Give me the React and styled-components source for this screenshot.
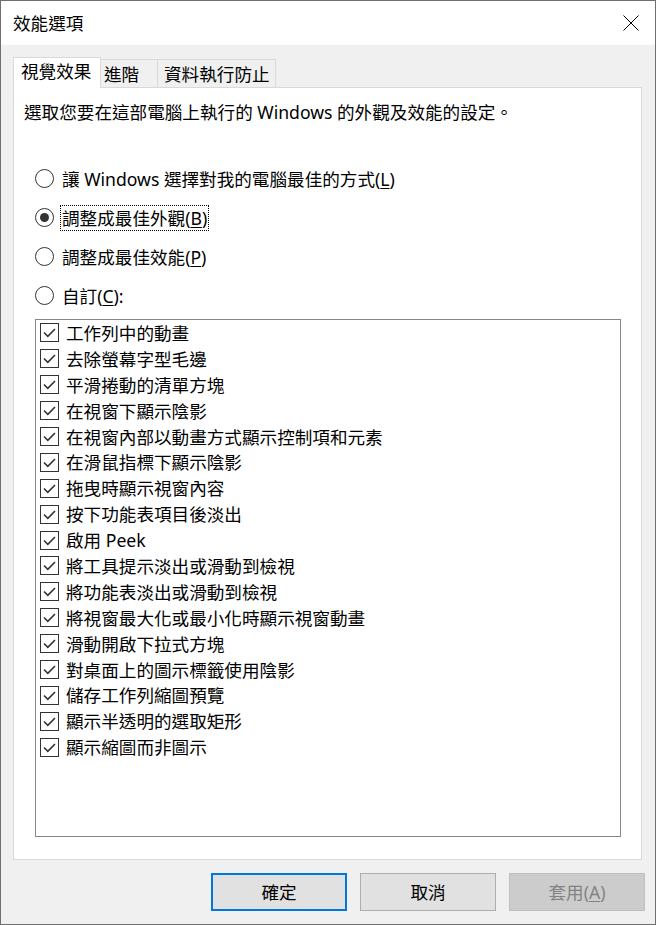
import React from "react";
import styled, { createGlobalStyle } from "styled-components";

const GlobalStyle = createGlobalStyle`
  html, body {
    margin: 0;
    padding: 0;
    background: #ffffff;
  }
  #root {
    width: 656px;
    height: 925px;
  }
`;

const Window = styled.div`
  width: 656px;
  height: 925px;
  box-sizing: border-box;
  border: 1px solid #6f6f6f;
  display: flex;
  flex-direction: column;
  font-family: "Noto Sans", "Noto Sans CJK TC", sans-serif;
  font-size: 17.6px;
  color: #000;
  background: #f0f0f0;
`;

const TitleBar = styled.div`
  height: 44px;
  flex: none;
  background: #ffffff;
  display: flex;
  align-items: center;
  justify-content: space-between;
  padding-left: 12px;
`;

const Title = styled.span`
  line-height: 24px;
`;

const CloseButton = styled.div`
  width: 48px;
  height: 44px;
  display: flex;
  align-items: center;
  justify-content: center;
`;

const Body = styled.div`
  flex: 1;
  display: flex;
  flex-direction: column;
  padding-top: 12px;
`;

const TabStrip = styled.div`
  display: flex;
  align-items: flex-end;
  height: 30px;
  margin-left: 12px;
  position: relative;
  z-index: 1;
`;

const Tab = styled.div`
  box-sizing: border-box;
  width: ${(p) => p.$w}px;
  padding-left: ${(p) => p.$pl}px;
  height: ${(p) => (p.$active ? 31 : 28)}px;
  margin-bottom: ${(p) => (p.$active ? -1 : 0)}px;
  margin-left: ${(p) => (p.$first ? 0 : -1)}px;
  border: 1px solid #d9d9d9;
  border-bottom: none;
  background: ${(p) => (p.$active ? "#ffffff" : "#f0f0f0")};
  position: relative;
  z-index: ${(p) => (p.$active ? 2 : 1)};
  display: flex;
  align-items: ${(p) => (p.$active ? "flex-start" : "center")};
  padding-top: ${(p) => (p.$active ? 1 : 0)}px;
  line-height: 24px;
  white-space: nowrap;
`;

const Panel = styled.div`
  box-sizing: border-box;
  height: 773px;
  margin: 0 13px 0 12px;
  border: 1px solid #d9d9d9;
  background: #ffffff;
  padding: 12px 0 0 10px;
  display: flex;
  flex-direction: column;
`;

const Description = styled.div`
  line-height: 24px;
  white-space: nowrap;
`;

const RadioGroup = styled.div`
  display: flex;
  flex-direction: column;
  gap: 14px;
  margin: 42px 0 0 11px;
`;

const RadioRow = styled.div`
  display: flex;
  align-items: center;
  height: 25px;
  gap: 6px;
`;

const RadioCircle = styled.span`
  box-sizing: border-box;
  width: 19px;
  height: 19px;
  border-radius: 50%;
  border: 1px solid #333333;
  background: #ffffff;
  display: flex;
  align-items: center;
  justify-content: center;
  flex: none;

  &::after {
    content: "";
    width: 9px;
    height: 9px;
    border-radius: 50%;
    background: #333333;
    display: ${(p) => (p.$checked ? "block" : "none")};
  }
`;

const RadioLabel = styled.span`
  line-height: 24px;
  padding: 0 1px;
  border: 1px dotted ${(p) => (p.$focused ? "#000000" : "transparent")};
  white-space: nowrap;

  u {
    text-underline-offset: 2px;
  }
`;

const ListBox = styled.div`
  box-sizing: border-box;
  width: 586px;
  height: 518px;
  margin: 11px 0 0 11px;
  border: 1px solid #828790;
  background: #ffffff;
  padding-left: 4px;
  display: flex;
  flex-direction: column;
`;

const ListItem = styled.div`
  height: 25.9px;
  display: flex;
  align-items: center;
  gap: 7px;
  white-space: nowrap;
  line-height: 24px;
`;

const CheckBox = styled.span`
  box-sizing: border-box;
  width: 19px;
  height: 19px;
  border: 1px solid #333333;
  background: #ffffff;
  display: flex;
  align-items: center;
  justify-content: center;
  flex: none;
`;

const ButtonRow = styled.div`
  display: flex;
  justify-content: flex-end;
  gap: 13px;
  margin-top: 13px;
  padding-right: 10px;
`;

const Button = styled.div`
  box-sizing: border-box;
  width: 136px;
  height: 38px;
  display: flex;
  align-items: center;
  justify-content: center;
  background: ${(p) => (p.$disabled ? "#cccccc" : "#e1e1e1")};
  border: ${(p) =>
    p.$default ? "2px solid #0078d7" : `1px solid ${p.$disabled ? "#bfbfbf" : "#adadad"}`};
  color: ${(p) => (p.$disabled ? "#838383" : "#000000")};
  line-height: 24px;

  u {
    text-underline-offset: 2px;
  }
`;

const CheckMark = () => (
  <svg width="17" height="17" viewBox="0 0 17 17">
    <polyline
      points="3,8.5 6.8,12.3 14,5"
      fill="none"
      stroke="#333333"
      strokeWidth="1.6"
    />
  </svg>
);

const CloseIcon = () => (
  <svg width="16" height="16" viewBox="0 0 16 16">
    <path d="M0.5 0.5 L15.5 15.5 M15.5 0.5 L0.5 15.5" stroke="#000" strokeWidth="1" fill="none" />
  </svg>
);

const effects = [
  "工作列中的動畫",
  "去除螢幕字型毛邊",
  "平滑捲動的清單方塊",
  "在視窗下顯示陰影",
  "在視窗內部以動畫方式顯示控制項和元素",
  "在滑鼠指標下顯示陰影",
  "拖曳時顯示視窗內容",
  "按下功能表項目後淡出",
  "啟用 Peek",
  "將工具提示淡出或滑動到檢視",
  "將功能表淡出或滑動到檢視",
  "將視窗最大化或最小化時顯示視窗動畫",
  "滑動開啟下拉式方塊",
  "對桌面上的圖示標籤使用陰影",
  "儲存工作列縮圖預覽",
  "顯示半透明的選取矩形",
  "顯示縮圖而非圖示",
];

const options = [
  { pre: "讓 Windows 選擇對我的電腦最佳的方式(", key: "L", post: ")" },
  { pre: "調整成最佳外觀(", key: "B", post: ")", checked: true },
  { pre: "調整成最佳效能(", key: "P", post: ")" },
  { pre: "自訂(", key: "C", post: "):" },
];

export default function App() {
  return (
    <>
      <GlobalStyle />
      <Window>
        <TitleBar>
          <Title>效能選項</Title>
          <CloseButton>
            <CloseIcon />
          </CloseButton>
        </TitleBar>
        <Body>
          <TabStrip>
            <Tab $active $first $w={88} $pl={7}>視覺效果</Tab>
            <Tab $w={58} $pl={3}>進階</Tab>
            <Tab $w={119} $pl={6}>資料執行防止</Tab>
          </TabStrip>
          <Panel>
            <Description>選取您要在這部電腦上執行的 Windows 的外觀及效能的設定。</Description>
            <RadioGroup>
              {options.map((o) => (
                <RadioRow key={o.key}>
                  <RadioCircle $checked={o.checked} />
                  <RadioLabel $focused={o.checked}>
                    {o.pre}
                    <u>{o.key}</u>
                    {o.post}
                  </RadioLabel>
                </RadioRow>
              ))}
            </RadioGroup>
            <ListBox>
              {effects.map((e) => (
                <ListItem key={e}>
                  <CheckBox>
                    <CheckMark />
                  </CheckBox>
                  {e}
                </ListItem>
              ))}
            </ListBox>
          </Panel>
          <ButtonRow>
            <Button $default>確定</Button>
            <Button>取消</Button>
            <Button $disabled>
              套用(<u>A</u>)
            </Button>
          </ButtonRow>
        </Body>
      </Window>
    </>
  );
}
